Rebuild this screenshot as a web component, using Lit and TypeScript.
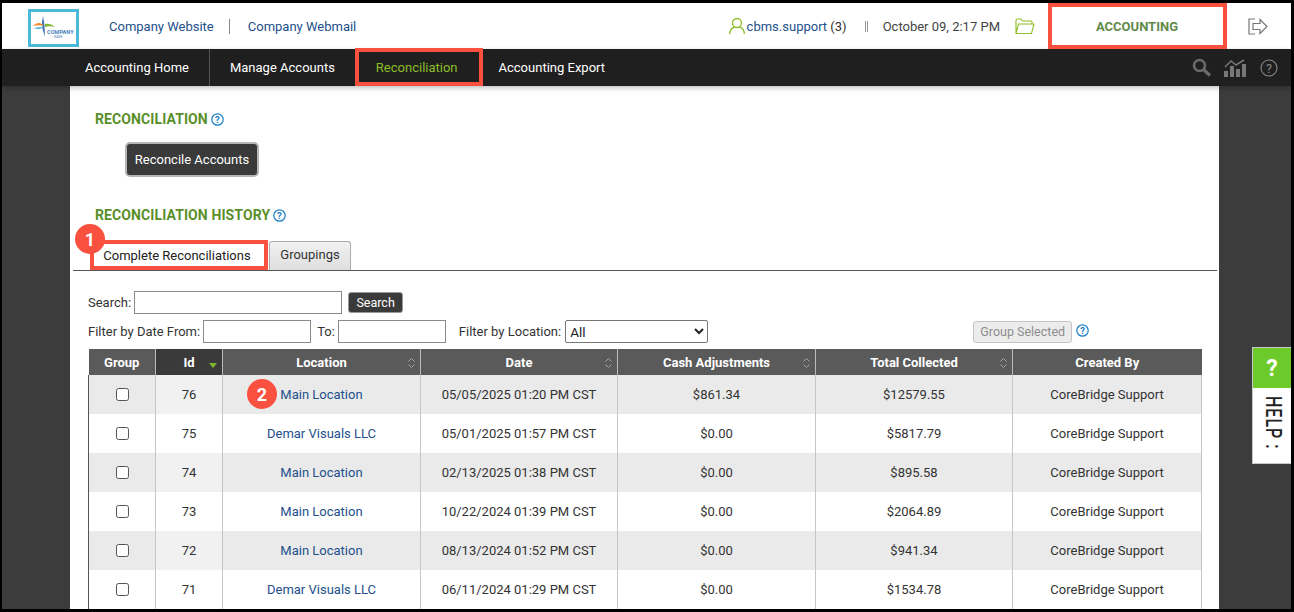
import { LitElement, html, css } from "lit";
import { customElement } from "lit/decorators.js";

const rows = [
  ["76", "Main Location", "05/05/2025 01:20 PM CST", "$861.34", "$12579.55"],
  ["75", "Demar Visuals LLC", "05/01/2025 01:57 PM CST", "$0.00", "$5817.79"],
  ["74", "Main Location", "02/13/2025 01:38 PM CST", "$0.00", "$895.58"],
  ["73", "Main Location", "10/22/2024 01:39 PM CST", "$0.00", "$2064.89"],
  ["72", "Main Location", "08/13/2024 01:52 PM CST", "$0.00", "$941.34"],
  ["71", "Demar Visuals LLC", "06/11/2024 01:29 PM CST", "$0.00", "$1534.78"],
];

const sortIcon = html`<svg class="sort" width="9" height="12" viewBox="0 0 9 12" fill="none" stroke="#a5a5a5" stroke-width="1"><path d="M1.5 4.5 4.5 1.5 7.5 4.5M1.5 7.5 4.5 10.5 7.5 7.5"/></svg>`;
const helpIcon = html`<svg class="qm" width="13" height="13" viewBox="0 0 13 13"><circle cx="6.5" cy="6.5" r="5.7" fill="none" stroke="#1a7fc8" stroke-width="1.2"/><text x="6.5" y="9.8" text-anchor="middle" font-size="9.5" font-weight="700" font-family="Roboto" fill="#1a7fc8">?</text></svg>`;

@customElement("app-root")
export class AppRoot extends LitElement {
  static styles = css`
    :host { display: block; width: 1294px; height: 612px; background: #000; padding: 3px 3px 3px 2px; box-sizing: border-box; overflow: hidden; position: relative; font-family: Roboto, "Liberation Sans", sans-serif; font-size: 13px; color: #333; }
    .frame { width: 100%; height: 100%; display: flex; flex-direction: column; overflow: hidden; background: #3c3c3c; }
    .top { flex: 0 0 46px; background: #fff; display: flex; align-items: center; }
    .logo { width: 51px; height: 38px; margin: 3px 0 0 26px; box-sizing: border-box; border: 3px solid #4bb9d8; background: #fff; flex: none; }
    .logo svg { display: block; }
    .toplink { color: #23508c; text-decoration: none; }
    .l1 { margin-left: 30px; }
    .vsep { width: 1px; height: 15px; background: #888; margin: 0 18px 0 15px; }
    .spacer { flex: 1; }
    .user { display: flex; align-items: center; margin-right: 18px; }
    .dsep { width: 3px; height: 11px; border-left: 1px solid #999; border-right: 1px solid #999; margin-right: 15px; box-sizing: border-box; }
    .date { margin-right: 15px; color: #444; }
    .mod { width: 170px; margin: 0 26px 0 17px; text-align: center; color: #5f8a4b; font-weight: 700; font-size: 13px; }
    .logout { margin-right: 23px; }
    .nav { flex: 0 0 37px; background: #1f1f1f; display: flex; align-items: stretch; color: #fff; position: relative; z-index: 1; box-shadow: 0 2px 5px rgba(0,0,0,.25); }
    .nav a { display: flex; align-items: center; color: #fff; }
    .n1 { padding: 0 20px 0 83px; border-right: 1px solid #555; }
    .n2 { padding: 0 20px; margin-right: 21px; }
    .n3 { color: #8dbe26 !important; margin-right: 41px; }
    .navicons { margin-left: auto; display: flex; align-items: center; padding-right: 13px; }
    .navicons svg + svg { margin-left: 12px; }
    .navicons svg:last-child { margin-left: 14px; }
    .body { flex: 1; min-height: 0; padding: 0 72px 0 68px; }
    .panel { height: 100%; background: #fff; padding: 25px 2px 0 3px; box-sizing: border-box; }
    h2 { margin: 0 0 0 22px; font-size: 14px; line-height: 16px; font-weight: 700; color: #5a8f29; display: flex; align-items: center; gap: 3px; letter-spacing: 0.1px; }
    .recbtn { display: block; margin: 15px 0 0 52px; width: 134px; height: 35px; background: #3a3a3a; color: #fff; border: 2px solid #b5b5b5; border-radius: 5px; font: inherit; padding: 0; }
    .hist { margin-top: 30px; }
    .tabs { display: flex; margin-top: 17px; height: 30px; border-bottom: 1px solid #555; padding-left: 20px; align-items: flex-end; }
    .tab { height: 29px; box-sizing: border-box; display: flex; align-items: center; justify-content: center; }
    .tab.on { width: 175px; color: #222; padding-right: 7px; }
    .tab.off { width: 82px; margin-left: 1px; border: 1px solid #aaa; border-bottom: 0; border-radius: 3px 3px 0 0; background: linear-gradient(#f2f2f2, #dedede); padding-bottom: 3px; color: #333; }
    .filters { margin: 20px 0 0 15px; width: 1114px; }
    .frow { display: flex; align-items: center; height: 23px; }
    .frow + .frow { margin-top: 6px; }
    input[type="text"] { box-sizing: border-box; height: 23px; border: 1px solid #8a8a8a; background: #fff; margin: 0 0 0 3px; padding: 0; }
    .s { width: 208px; }
    .d { width: 108px; }
    .to { margin-left: 6px; }
    .floc { margin-left: 13px; }
    .sbtn { margin-left: 6px; width: 55px; height: 21px; background: #3a3a3a; color: #fff; border: 1px solid #999; border-radius: 3px; font: inherit; font-size: 12.5px; padding: 0; }
    select { width: 143px; height: 23px; margin-left: 4px; font: inherit; font-size: 13.5px; background: #fff; border: 1px solid #777; border-radius: 2px; color: #222; }
    .gbtn { margin-left: 265px; width: 99px; height: 22px; background: #ececec; color: #8c8c8c; border: 1px solid #c4c4c4; border-radius: 3px; font: inherit; font-size: 12.5px; padding: 0; }
    .gq { margin-left: 4px; margin-top: -3px; display: flex; }
    table { border-collapse: collapse; table-layout: fixed; width: 1113px; margin: 6px 0 0 15px; }
    th { height: 26px; padding: 0; background: #5a5a5a; color: #fff; font-size: 13px; font-weight: 700; border-left: 1px solid #bbb; position: relative; }
    th.act { background: #3a3a3a; }
    th:first-child { border-left: 0; }
    .sort { position: absolute; right: 4px; top: 8px; }
    .arrow { position: absolute; right: 5px; top: 14px; width: 0; height: 0; border: 4px solid transparent; border-top: 5px solid #7fb52a; border-bottom: 0; }
    td { height: 39px; padding: 0; text-align: center; border-left: 1px solid #c6c6c6; background: #fff; color: #333; }
    td:first-child { border-left: 1px solid #555; }
    td:last-child { border-right: 1px solid #c6c6c6; }
    tr:nth-child(odd) td { background: #eaeaea; }
    tr:nth-child(odd) td.id { background: #f1f1f1; }
    tr:nth-child(even) td.id { background: #fff; }
    td a { color: #23508c; }
    .cb { display: block; margin: 0 auto; width: 13px; height: 13px; box-sizing: border-box; border: 1px solid #555; border-radius: 2.5px; background: #fff; }
    .help { position: absolute; right: 3px; top: 347px; width: 39px; height: 117px; box-sizing: border-box; border: 1px solid #c8c8c8; border-right: 0; background: #fff; }
    .helpq { height: 40px; background: #6ccb2a; color: #fff; font-size: 23px; font-weight: 700; display: flex; align-items: center; justify-content: center; }
    .helpt { position: absolute; left: 12px; top: 48px; writing-mode: vertical-rl; font-size: 16px; font-weight: 500; color: #222; letter-spacing: 1px; line-height: 16px; transform: scaleX(1.35); white-space: pre; }
    .mark { position: absolute; box-sizing: border-box; border: 4px solid #f9503f; pointer-events: none; z-index: 2; }
    .badge { position: absolute; width: 30px; height: 30px; border-radius: 50%; background: #f9503f; color: #fff; font-weight: 700; font-size: 18px; display: flex; align-items: center; justify-content: center; z-index: 3; }
  `;

  render() {
    return html`
      <div class="frame">
        <div class="top">
          <div class="logo">
            <svg width="45" height="32" viewBox="0 0 45 32">
              <path d="M12 4 13.5 13 14 24.5 11.5 17 11 10Z" fill="#3d6fb8"/>
              <path d="M2 14C6 10 10 10 13 14 9 13 6 13 2 14Z" fill="#f08a2c"/>
              <path d="M3 16C7 15 10 15 13 15 10 17 6 18 3 16Z" fill="#49b4d6"/>
              <path d="M14 12C17 11 21 12 24 15 20 14 17 14 14 15Z" fill="#84b83a"/>
              <text x="16" y="22" font-size="5.6" font-weight="700" font-family="Roboto" fill="#4a7fc0">COMPANY</text>
              <text x="23" y="26" font-size="3" font-family="Roboto" fill="#4a7fc0">NAME</text>
            </svg>
          </div>
          <a class="toplink l1">Company Website</a>
          <span class="vsep"></span>
          <a class="toplink">Company Webmail</a>
          <span class="spacer"></span>
          <span class="user">
            <svg width="19" height="18" viewBox="0 0 19 18" fill="none" stroke="#8dbe26" stroke-width="1.3"><circle cx="9" cy="6" r="4.5"/><path d="M1.5 17C2 13 4.5 10.5 6.5 10M16.5 17C16 13 13.5 10.5 11.5 10"/></svg>
            <span><a class="toplink">cbms.support</a> (3)</span>
          </span>
          <span class="dsep"></span>
          <span class="date">October 09, 2:17 PM</span>
          <svg width="20" height="17" viewBox="0 0 20 17" fill="none" stroke="#8dbe26" stroke-width="1.1"><path d="M1 15.5V2.5C1 1.8 1.5 1 2.3 1H6L7.5 3H16C16.8 3 17 3.5 17 4V6M1 15.5 3.5 6H19L16.5 15.5Z"/></svg>
          <div class="mod">ACCOUNTING</div>
          <svg class="logout" width="20" height="17" viewBox="0 0 20 17" fill="none" stroke="#777" stroke-width="1.2"><path d="M7 1H1V16H7"/><path d="M5 5.5H12V1.5L19 8.5 12 15.5V11.5H5Z"/></svg>
        </div>
        <div class="nav">
          <a class="n1">Accounting Home</a>
          <a class="n2">Manage Accounts</a>
          <a class="n3">Reconciliation</a>
          <a>Accounting Export</a>
          <div class="navicons">
            <svg width="20" height="19" viewBox="0 0 20 19" fill="none" stroke="#6a6a6a"><circle cx="7.5" cy="7.5" r="5.5" stroke-width="2.6"/><path d="M12 12 18 17.5" stroke-width="3.2"/></svg>
            <svg width="22" height="18" viewBox="0 0 22 18" fill="#777"><path d="M1 8 7 2 12 6 20 1" fill="none" stroke="#777" stroke-width="1.5"/><rect x="0" y="12" width="4" height="6"/><rect x="6" y="7" width="4" height="11"/><rect x="12" y="10" width="4" height="8"/><rect x="18" y="5" width="4" height="13"/></svg>
            <svg width="18" height="18" viewBox="0 0 18 18"><circle cx="9" cy="9" r="8" fill="none" stroke="#888" stroke-width="1.1"/><text x="9" y="13.5" text-anchor="middle" font-size="12.5" font-family="Roboto" fill="#888">?</text></svg>
          </div>
        </div>
        <div class="body">
          <div class="panel">
            <h2>RECONCILIATION ${helpIcon}</h2>
            <button class="recbtn">Reconcile Accounts</button>
            <h2 class="hist">RECONCILIATION HISTORY ${helpIcon}</h2>
            <div class="tabs">
              <div class="tab on">Complete Reconciliations</div>
              <div class="tab off">Groupings</div>
            </div>
            <div class="filters">
              <div class="frow">Search:<input type="text" class="s" /><button class="sbtn">Search</button></div>
              <div class="frow">
                Filter by Date From:<input type="text" class="d" />
                <span class="to">To:</span><input type="text" class="d" />
                <span class="floc">Filter by Location:</span>
                <select><option>All</option></select>
                <button class="gbtn">Group Selected</button><span class="gq">${helpIcon}</span>
              </div>
            </div>
            <table>
              <colgroup><col style="width:67px"/><col style="width:67px"/><col style="width:198px"/><col style="width:197px"/><col style="width:198px"/><col style="width:197px"/><col style="width:189px"/></colgroup>
              <thead><tr>
                <th>Group</th>
                <th class="act">Id<span class="arrow"></span></th>
                <th>Location${sortIcon}</th>
                <th>Date${sortIcon}</th>
                <th>Cash Adjustments${sortIcon}</th>
                <th>Total Collected${sortIcon}</th>
                <th>Created By</th>
              </tr></thead>
              <tbody>
                ${rows.map(r => html`<tr>
                  <td><span class="cb"></span></td>
                  <td class="id">${r[0]}</td>
                  <td><a>${r[1]}</a></td>
                  <td>${r[2]}</td>
                  <td>${r[3]}</td>
                  <td>${r[4]}</td>
                  <td>CoreBridge Support</td>
                </tr>`)}
              </tbody>
            </table>
          </div>
        </div>
      </div>
      <div class="help"><div class="helpq">?</div><div class="helpt">HELP :</div></div>
      <div class="mark" style="left:1048px;top:3px;width:179px;height:46px"></div>
      <div class="mark" style="left:355px;top:48px;width:128px;height:38px"></div>
      <div class="mark" style="left:90px;top:240px;width:178px;height:30px"></div>
      <div class="badge" style="left:75px;top:224px">1</div>
      <div class="badge" style="left:247px;top:379px">2</div>
    `;
  }
}
